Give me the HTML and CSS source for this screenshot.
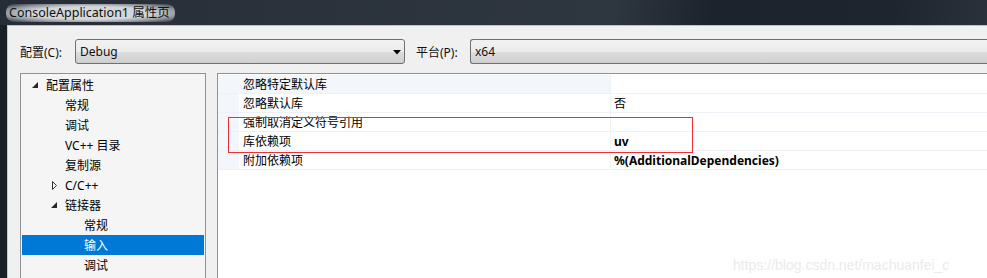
FILE: index.html
```html
<!DOCTYPE html>
<html>
<head>
<meta charset="utf-8">
<link rel="stylesheet" href="styles.css">
</head>
<body>
<div class="titlebar"><span class="title">ConsoleApplication1 属性页</span></div>
<div class="frame">
  <div class="config-row">
    <span class="lbl lbl-config">配置(C):</span>
    <div class="combo combo-config"><span>Debug</span><svg class="arrow" width="8" height="5" viewBox="0 0 8 5"><polygon points="0,0 8,0 4,4.5" fill="#000"/></svg></div>
    <span class="lbl lbl-platform">平台(P):</span>
    <div class="combo combo-platform"><span>x64</span></div>
  </div>
  <div class="panels">
    <div class="tree">
      <div class="node l0"><svg class="exp" width="6" height="6" viewBox="0 0 6 6"><polygon points="6,0 6,6 0,6" fill="#262626"/></svg><span>配置属性</span></div>
      <div class="node l1"><span>常规</span></div>
      <div class="node l1"><span>调试</span></div>
      <div class="node l1"><span>VC++ 目录</span></div>
      <div class="node l1"><span>复制源</span></div>
      <div class="node l1"><svg class="col" width="5" height="9" viewBox="0 0 5 9"><polygon points="0.5,0.5 4.5,4.5 0.5,8.5" fill="none" stroke="#333" stroke-width="1"/></svg><span>C/C++</span></div>
      <div class="node l1"><svg class="exp" width="6" height="6" viewBox="0 0 6 6"><polygon points="6,0 6,6 0,6" fill="#262626"/></svg><span>链接器</span></div>
      <div class="node l2"><span>常规</span></div>
      <div class="node l2 selected"><span>输入</span></div>
      <div class="node l2"><span>调试</span></div>
    </div>
    <div class="grid">
      <div class="row first"><div class="gutter"></div><div class="name">忽略特定默认库</div><div class="value"></div></div>
      <div class="row"><div class="gutter"></div><div class="name">忽略默认库</div><div class="value">否</div></div>
      <div class="row"><div class="gutter"></div><div class="name">强制取消定义符号引用</div><div class="value"></div></div>
      <div class="row"><div class="gutter"></div><div class="name">库依赖项</div><div class="value bold">uv</div></div>
      <div class="row"><div class="gutter"></div><div class="name">附加依赖项</div><div class="value bold">%(AdditionalDependencies)</div></div>
      <div class="highlight-box"></div>
      <div class="watermark">https://blog.csdn.net/machuanfei_c</div>
    </div>
  </div>
</div>
</body>
</html>
```

FILE: styles.css
```css
html, body {
  margin: 0;
  padding: 0;
  width: 987px;
  height: 278px;
  overflow: hidden;
  background: #1b1f26;
  font-family: "Noto Sans", "Noto Sans CJK SC", sans-serif;
  font-size: 12px;
  color: #000;
}

.titlebar {
  height: 25px;
  box-sizing: border-box;
  padding-left: 9px;
  display: flex;
  align-items: center;
  background: linear-gradient(100deg, #262d37 0%, #2b323c 30%, #2e3640 62%, #1d232c 72%, #1f252e 90%, #2a313a 100%);
}

.title {
  color: #111;
  font-size: 12.5px;
  line-height: 16px;
  padding: 1px 5px 1px 3px;
  margin-left: -3px;
  background: radial-gradient(ellipse at center, rgba(225,229,233,0.92) 50%, rgba(225,229,233,0.55) 75%, rgba(225,229,233,0) 100%);
  border-radius: 8px;
}

.frame {
  margin-left: 7px;
  height: 253px;
  box-sizing: border-box;
  border-left: 1px solid #c5cad0;
  border-top: 1px solid #b9c0c6;
  background: #f0f0f0;
}

.config-row {
  display: flex;
  align-items: center;
  padding-top: 13px;
  padding-left: 12px;
  height: 25px;
}

.config-row > * {
  flex-shrink: 0;
}

.lbl {
  white-space: nowrap;
  color: #111;
}

.lbl-config { width: 55px; }
.lbl-platform { width: 54px; margin-left: 11px; }

.combo {
  height: 25px;
  box-sizing: border-box;
  border: 1px solid #707070;
  border-radius: 3px;
  background: linear-gradient(#f2f2f2 0%, #ebebeb 50%, #dddddd 51%, #cfcfcf 100%);
  display: flex;
  align-items: center;
  padding-left: 4px;
  color: #111;
}

.combo-config {
  width: 330px;
  justify-content: space-between;
  padding-right: 3px;
}

.combo-platform {
  width: 540px;
  border-right: none;
  border-radius: 3px 0 0 3px;
}

.arrow { margin-top: 1px; }

.panels {
  display: flex;
  margin-top: 9px;
  padding-left: 12px;
  gap: 11px;
  height: 210px;
}

.tree {
  width: 186px;
  flex-shrink: 0;
  box-sizing: border-box;
  border: 1px solid #8f9296;
  border-bottom: none;
  background: #f5f5f5;
  padding-top: 1px;
  padding-left: 1px;
  padding-right: 1px;
}

.node {
  height: 20px;
  display: flex;
  align-items: center;
  position: relative;
  white-space: nowrap;
}

.node svg {
  position: absolute;
}

.l0 { padding-left: 24px; }
.l0 .exp { left: 10px; top: 7px; }
.l1 { padding-left: 43px; }
.l1 .exp { left: 29px; top: 7px; }
.l1 .col { left: 30px; top: 6px; }
.l2 { padding-left: 62px; }

.selected {
  background: #0078d7;
  color: #fff;
}

.grid {
  flex: 1;
  position: relative;
  box-sizing: border-box;
  border-left: 1px solid #8f9296;
  border-top: 1px solid #8f9296;
  background: #fff;
  padding-top: 1px;
}

.row {
  display: flex;
  height: 19px;
  box-sizing: border-box;
  border-bottom: 1px solid #eef2f8;
}

.gutter {
  width: 21px;
  background: #f3f6fb;
}

.name {
  width: 372px;
  padding-left: 4px;
  box-sizing: border-box;
  display: flex;
  align-items: center;
  border-right: 1px solid #eef2f8;
  white-space: nowrap;
}

.row.first .name { background: #f3f6fb; }

.value {
  flex: 1;
  padding-left: 3px;
  display: flex;
  align-items: center;
  white-space: nowrap;
}

.bold { font-weight: bold; }

.highlight-box {
  position: absolute;
  left: 10px;
  top: 43px;
  width: 465px;
  height: 36px;
  box-sizing: border-box;
  border: 1px solid #ec2f35;
}

.watermark {
  position: absolute;
  left: 515px;
  top: 183px;
  font-family: "Liberation Sans", Arial, sans-serif;
  font-size: 14px;
  color: #ebebeb;
  white-space: nowrap;
}
```
